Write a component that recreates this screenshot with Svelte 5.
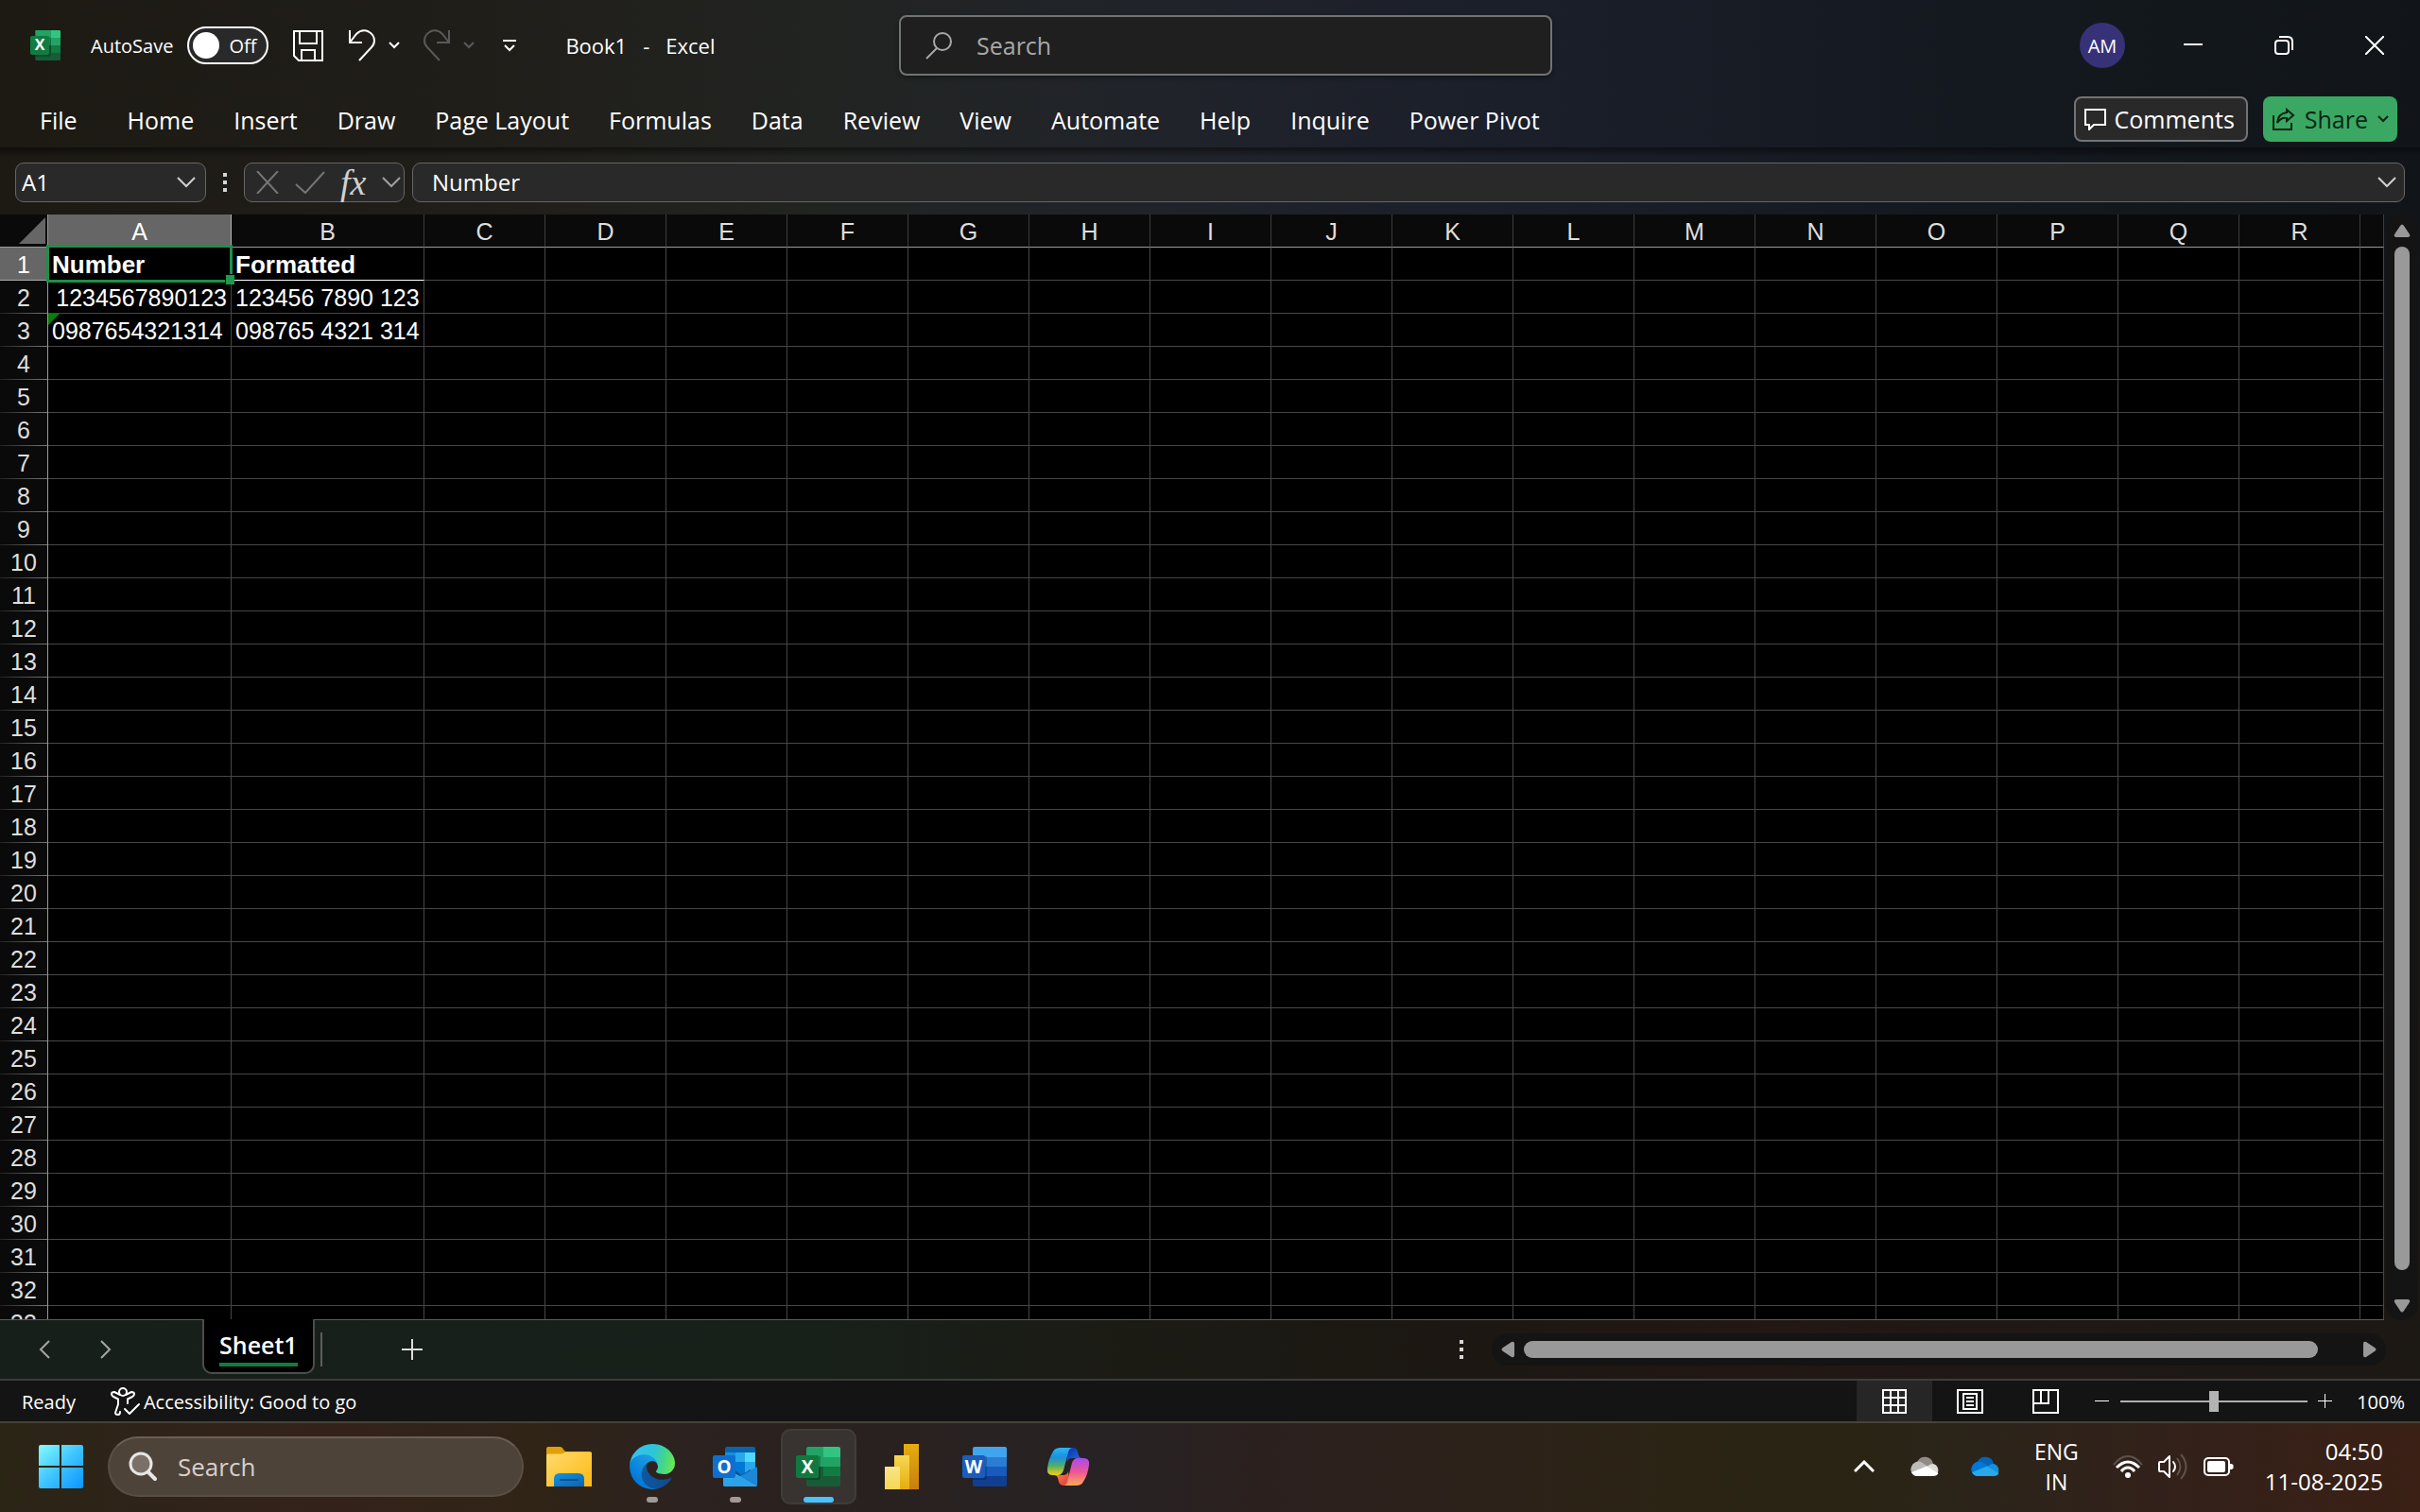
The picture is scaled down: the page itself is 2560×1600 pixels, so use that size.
<script>
  const menus = ['File', 'Home', 'Insert', 'Draw', 'Page Layout', 'Formulas', 'Data', 'Review', 'View', 'Automate', 'Help', 'Inquire', 'Power Pivot'];
  const columns = 'ABCDEFGHIJKLMNOPQR'.split('');
  const rows = Array.from({ length: 33 }, (_, i) => i + 1);
  const cells = {
    A1: { text: 'Number', kind: 'bold' },
    B1: { text: 'Formatted', kind: 'bold under' },
    A2: { text: '1234567890123', kind: 'num' },
    B2: { text: '123456 7890 123', kind: '' },
    A3: { text: '0987654321314', kind: 'flag' },
    B3: { text: '098765 4321 314', kind: '' }
  };
  let autosave = $state(false);
  let cellName = $state('A1');
  let formula = $state('Number');
  let query = $state('');
  let taskQuery = $state('');
  let zoom = $state(100);
</script>

{#snippet chevron(w, h, sw)}
  <svg width={w} height={h} viewBox="0 0 {w} {h}" fill="none" stroke="currentColor" stroke-width={sw}>
    <path d="M1 1L{w / 2} {h - 2}L{w - 1} 1" />
  </svg>
{/snippet}

{#snippet cloud(top, left, right, front)}
  <svg width="32" height="22" viewBox="0 0 32 22">
    <path d="M8 6A9 9 0 0 1 25 8L17 13z" fill={top} />
    <path d="M8 21A7 7 0 0 1 2 11 8 8 0 0 1 12 6L20 11 8 21z" fill={left} />
    <path d="M18 11.500Q21 8 25 8A7 7 0 0 1 28 20L18 14z" fill={right} />
    <path d="M2 17L18 10.500 30.500 18Q29 21 25 21H8Q4 21 2 17z" fill={front} />
  </svg>
{/snippet}

{#snippet excelIcon(size)}
  <svg width={size} height={size} viewBox="0 0 48 48">
    <path d="M18 0H32V16H16V2Q16 0 18 0z" fill="#21a366" />
    <path d="M32 0H46Q48 0 48 2V12H32z" fill="#33c481" />
    <path d="M8 12H32V24H8z" fill="#21a366" />
    <path d="M32 12H48V24H32z" fill="#21a366" />
    <path d="M8 24H32V36H8z" fill="#185c37" />
    <path d="M32 24H48V36H32z" fill="#107c41" />
    <path d="M8 36H48V46Q48 48 46 48H10Q8 48 8 46z" fill="#185c37" />
    <path d="M8 0H32V12H8z" fill="#21a366" />
    <path d="M8 11H30Q33 11 33 14V38Q33 42 29 42H8z" fill="#000" opacity=".2" />
    <rect y="9" width="30" height="30" rx="3" fill="#107c41" />
    <text x="15" y="32" class="glyph">X</text>
  </svg>
{/snippet}

<div class="desktop">
  <header class="chrome">
    <div class="titlebar">
      <div class="quick">
        {@render excelIcon(32)}
        <label class="autosave">
          <span>AutoSave</span>
          <input type="checkbox" role="switch" bind:checked={autosave} />
          <span class="switch"><i></i>Off</span>
        </label>
        <button class="save" aria-label="Save">
          <svg width="32" height="33" viewBox="0 0 32 33" fill="none" stroke="#fff" stroke-width="2">
            <path d="M1 1H31V32H6L1 27zM7 1V14H25V1M9 32V21H23V32" />
          </svg>
        </button>
        <button class="undo" aria-label="Undo">
          <svg width="30" height="34" viewBox="0 0 30 34" fill="none" stroke="#fff" stroke-width="2">
            <path d="M2 1V14H15M2 14L9 5Q15-1 22 2.500 28 6 28 12 28 16 25 19L12 33" />
          </svg>
          {@render chevron(12, 8, 2)}
        </button>
        <button class="redo" aria-label="Redo">
          <svg width="30" height="34" viewBox="0 0 30 34" fill="none" stroke="currentColor" stroke-width="2">
            <path d="M28 1V14H15M28 14L21 5Q15-1 8 2.500 2 6 2 12 2 16 5 19L18 33" />
          </svg>
          {@render chevron(12, 8, 2)}
        </button>
        <button class="custom" aria-label="Customize Quick Access Toolbar">
          <svg width="14" height="13" viewBox="0 0 14 13" fill="none" stroke="#fff" stroke-width="2">
            <path d="M0 1H14M2 6L7 11 12 6" />
          </svg>
        </button>
        <h1><span>Book1</span><span>-</span><span>Excel</span></h1>
      </div>
      <label class="search">
        <svg width="30" height="30" viewBox="0 0 30 30" fill="none" stroke="#a8a8a8" stroke-width="2">
          <circle cx="18" cy="11" r="9" /><path d="M12 18L1 29" />
        </svg>
        <input type="text" placeholder="Search" aria-label="Search commands" bind:value={query} />
      </label>
      <div class="window">
        <button class="avatar">AM</button>
        <button aria-label="Minimize"><svg width="20" height="20" viewBox="0 0 20 20"><path d="M0 9H20" stroke="#fff" stroke-width="2" /></svg></button>
        <button aria-label="Restore">
          <svg width="20" height="20" viewBox="0 0 20 20" fill="none" stroke="#fff" stroke-width="2">
            <rect x="1" y="5" width="14" height="14" rx="3" /><path d="M5 1H14Q19 1 19 6V15" />
          </svg>
        </button>
        <button aria-label="Close"><svg width="20" height="20" viewBox="0 0 20 20"><path d="M0 0L20 20M20 0L0 20" stroke="#fff" stroke-width="2" /></svg></button>
      </div>
    </div>

    <div class="ribbon">
      <nav>
        {#each menus as m}
          <button class:file={m === 'File'}>{m}</button>
        {/each}
      </nav>
      <button class="comments">
        <svg width="23" height="23" viewBox="0 0 23 23" fill="none" stroke="#fff" stroke-width="2"><path d="M1 1H22V17H10L5 22V17H1z" /></svg>
        Comments
      </button>
      <button class="share">
        <svg width="24" height="24" viewBox="0 0 24 24" fill="none" stroke="#0b2415" stroke-width="2">
          <path d="M1 8V23H20V16" /><path d="M15 2L22 8 15 14V11Q9 10 5 16 6 6 15 5z" />
        </svg>
        Share
        {@render chevron(12, 8, 2)}
      </button>
    </div>

    <div class="formulabar">
      <div class="field namebox">
        <input type="text" aria-label="Name box" bind:value={cellName} />
        <button aria-label="Open name list">{@render chevron(20, 12, 2)}</button>
      </div>
      <span class="dots"><i></i><i></i><i></i></span>
      <div class="field fx">
        <button class="dim" aria-label="Cancel"><svg width="24" height="24" viewBox="0 0 24 24"><path d="M1 0L23 24M23 0L1 24" stroke="currentColor" stroke-width="2" /></svg></button>
        <button class="dim" aria-label="Enter"><svg width="32" height="24" viewBox="0 0 32 24" fill="none"><path d="M1 14L11 23 31 1" stroke="currentColor" stroke-width="2" /></svg></button>
        <button class="fn">fx</button>
        <button class="mid" aria-label="Function list">{@render chevron(20, 12, 2)}</button>
      </div>
      <div class="field formula">
        <input type="text" aria-label="Formula" bind:value={formula} />
        <button aria-label="Expand formula bar">{@render chevron(20, 12, 2)}</button>
      </div>
    </div>
  </header>

  <main class="work">
    <div class="sheet">
      <table>
        <colgroup>
          <col class="cnum" /><col class="ca" /><col class="cb" />
          {#each columns.slice(2) as c}<col class="cx" />{/each}
          <col />
        </colgroup>
        <thead>
          <tr>
            <th class="corner" aria-label="Select all"><svg width="28" height="28" viewBox="0 0 28 28"><path d="M28 0V28H0z" fill="#666" /></svg></th>
            {#each columns as c}<th class:on={c === 'A'}>{c}</th>{/each}
            <th aria-label="Next column"></th>
          </tr>
        </thead>
        <tbody>
          {#each rows as r}
            <tr>
              <th class:on={r === 1}>{r}</th>
              {#each columns as c}
                {@const cell = cells[c + r]}
                <td class={cell?.kind} class:sel={c + r === 'A1'}>{cell?.text ?? ''}</td>
              {/each}
              <td></td>
            </tr>
          {/each}
        </tbody>
      </table>
    </div>
    <div class="vscroll">
      <div class="vtrack">
        <button aria-label="Scroll up"><svg width="18" height="14" viewBox="0 0 18 14"><path d="M7 2Q9-1 11 2L17 11Q18 14 15 14H3Q0 14 1 11z" fill="#999" /></svg></button>
        <div class="vthumb"></div>
        <button aria-label="Scroll down"><svg width="18" height="14" viewBox="0 0 18 14"><path d="M7 12Q9 15 11 12L17 3Q18 0 15 0H3Q0 0 1 3z" fill="#999" /></svg></button>
      </div>
    </div>
  </main>

  <div class="sheetbar">
    <div class="arrows">
      <button aria-label="Previous sheet"><svg width="12" height="20" viewBox="0 0 12 20" fill="none" stroke="#a5a5a5" stroke-width="2"><path d="M11 1L2 10 11 19" /></svg></button>
      <button aria-label="Next sheet"><svg width="12" height="20" viewBox="0 0 12 20" fill="none" stroke="#a5a5a5" stroke-width="2"><path d="M1 1L10 10 1 19" /></svg></button>
    </div>
    <button class="tab"><span>Sheet1</span></button>
    <span class="divider"></span>
    <button class="add" aria-label="New sheet"><svg width="22" height="22" viewBox="0 0 22 22"><path d="M0 11H22M11 0V22" stroke="#ddd" stroke-width="2" /></svg></button>
    <span class="dots"><i></i><i></i><i></i></span>
    <div class="htrack">
      <button aria-label="Scroll left"><svg width="14" height="18" viewBox="0 0 14 18"><path d="M2 7Q-1 9 2 11L11 17Q14 18 14 15V3Q14 0 11 1z" fill="#999" /></svg></button>
      <div class="hthumb"></div>
      <button aria-label="Scroll right"><svg width="14" height="18" viewBox="0 0 14 18"><path d="M12 7Q15 9 12 11L3 17Q0 18 0 15V3Q0 0 3 1z" fill="#999" /></svg></button>
    </div>
  </div>

  <div class="status">
    <span class="ready">Ready</span>
    <button class="access">
      <svg width="32" height="30" viewBox="0 0 32 30" fill="none" stroke="#fff" stroke-width="2" stroke-linecap="round" stroke-linejoin="round">
        <circle cx="13" cy="5" r="4" />
        <path d="M10 8L4 5Q1 5 1 7 1 9 3 10L8 12.500V18L5 27Q5 29 8 29 10 29 10 26M16 8L22 5Q25 5 25 7 25 9 23 10L18 12.500V17" />
        <path d="M15 23L20 28 30 18" />
      </svg>
      <span>Accessibility: Good to go</span>
    </button>
    <span class="fill"></span>
    <button class="view active" aria-label="Normal view"><svg width="26" height="26" viewBox="0 0 26 26" fill="none" stroke="#fff" stroke-width="2"><path d="M1 1H25V25H1zM1 9H25M1 17H25M9 1V25M17 1V25" /></svg></button>
    <button class="view" aria-label="Page layout view"><svg width="28" height="26" viewBox="0 0 28 26" fill="none" stroke="#fff" stroke-width="2"><path d="M1 1H27V25H1zM7 5H21V21H7zM10 9H18M10 13H18M10 17H18" /></svg></button>
    <button class="view" aria-label="Page break view"><svg width="28" height="26" viewBox="0 0 28 26" fill="none" stroke="#fff" stroke-width="2"><path d="M1 1H27V25H1zM1 15H17V1M9 1V15" /></svg></button>
    <button class="minus" aria-label="Zoom out"><svg width="15" height="15" viewBox="0 0 15 15"><path d="M0 7.500H15" stroke="#fff" /></svg></button>
    <input type="range" min="10" max="190" aria-label="Zoom" bind:value={zoom} />
    <button class="plus" aria-label="Zoom in"><svg width="15" height="15" viewBox="0 0 15 15"><path d="M0 7.500H15M7.500 0V15" stroke="#fff" /></svg></button>
    <span class="percent">{zoom}%</span>
  </div>

  <footer class="taskbar">
    <button class="start" aria-label="Start">
      <svg width="47" height="46" viewBox="0 0 47 46">
        <defs><linearGradient id="win" x1="0" y1="0" x2="1" y2="1"><stop offset="0" stop-color="#84fbff" /><stop offset=".5" stop-color="#40c4ff" /><stop offset="1" stop-color="#0a94ff" /></linearGradient></defs>
        <path d="M2 0H22V22H0V2Q0 0 2 0zM24 0H45Q47 0 47 2V22H24zM0 24H22V46H2Q0 46 0 44zM24 24H47V44Q47 46 45 46H24z" fill="url(#win)" />
      </svg>
    </button>
    <label class="tasksearch">
      <svg width="30" height="32" viewBox="0 0 30 32" fill="none" stroke="#e6e6e6" stroke-width="3" stroke-linecap="round">
        <circle cx="13" cy="13" r="11" fill="#7b7067" /><path d="M21 22L28 29" stroke-width="4" />
      </svg>
      <input type="text" placeholder="Search" aria-label="Search the computer" bind:value={taskQuery} />
    </label>
    <div class="apps">
      <button class="app" aria-label="File Explorer">
        <svg width="48" height="42" viewBox="0 0 48 42">
          <defs>
            <linearGradient id="fold" x1="0" y1="0" x2="1" y2="1"><stop offset="0" stop-color="#ffdb6e" /><stop offset="1" stop-color="#fdb813" /></linearGradient>
            <linearGradient id="foldb" x1="0" y1="0" x2="1" y2="1"><stop offset="0" stop-color="#1593dd" /><stop offset="1" stop-color="#0963b4" /></linearGradient>
          </defs>
          <path d="M0 2Q0 0 2 0H14Q17 0 18 3L20 5H46Q48 5 48 7V14H0z" fill="#e0a006" />
          <path d="M0 9Q0 8 2 7.500H16Q18 7.500 20 5.500H46Q48 5.500 48 7.500V42H0z" fill="url(#fold)" />
          <path d="M8 42V34Q8 28 14 28H34Q40 28 40 34V42z" fill="url(#foldb)" />
          <path d="M15 35H33" stroke="#0b4f92" stroke-width="2" stroke-linecap="round" />
        </svg>
      </button>
      <button class="app open" aria-label="Edge">
        <svg width="48" height="48" viewBox="0 0 256 256">
          <defs>
            <linearGradient id="e1" x1="63" y1="180" x2="241" y2="180" gradientUnits="userSpaceOnUse"><stop offset="0" stop-color="#0c59a4" /><stop offset="1" stop-color="#114a8b" /></linearGradient>
            <linearGradient id="e2" x1="157" y1="100" x2="46" y2="220" gradientUnits="userSpaceOnUse"><stop offset="0" stop-color="#1b9de2" /><stop offset=".3" stop-color="#1595df" /><stop offset="1" stop-color="#0078d7" /></linearGradient>
            <linearGradient id="e3" x1="10" y1="70" x2="255" y2="130" gradientUnits="userSpaceOnUse"><stop offset="0" stop-color="#35c1f1" /><stop offset=".5" stop-color="#2fc4d8" /><stop offset=".75" stop-color="#44d68a" /><stop offset="1" stop-color="#66eb4c" /></linearGradient>
          </defs>
          <g transform="translate(-4.630 -4.920)">
            <path fill="url(#e1)" d="M235.680 195.460a93.730 93.730 0 0 1-10.540 4.710 101.870 101.870 0 0 1-35.900 6.460c-47.320 0-88.540-32.550-88.540-74.320A31.480 31.480 0 0 1 117.130 105c-42.800 1.800-53.800 46.400-53.800 72.530 0 73.880 68.090 81.370 82.760 81.370 7.910 0 19.840-2.300 27-4.560l1.310-.44a128.340 128.340 0 0 0 66.600-52.800 4 4 0 0 0-5.320-5.640z" />
            <path fill="url(#e2)" d="M110.340 246.340A79.200 79.200 0 0 1 87.600 225a80.720 80.720 0 0 1 29.530-120c3.120-1.470 8.450-4.130 15.540-4a32.350 32.350 0 0 1 25.690 13 31.880 31.880 0 0 1 6.360 18.660c0-.21 24.460-79.600-80-79.600-43.900 0-80 41.660-80 78.210a130.150 130.150 0 0 0 12.110 56 128 128 0 0 0 156.380 67.110 75.550 75.550 0 0 1-62.780-8z" />
            <path fill="url(#e3)" d="M156.940 153.780c-.81 1.050-3.300 2.500-3.300 5.660 0 2.610 1.700 5.120 4.720 7.230 14.380 10 41.490 8.680 41.560 8.680a59.560 59.560 0 0 0 30.270-8.350 61.380 61.380 0 0 0 30.430-52.880c.26-22.410-8-37.310-11.340-43.910C228.090 28.760 182.350 4.920 132.610 4.920a128 128 0 0 0-128 126.200c.48-36.540 36.800-66.050 80-66.050 3.500 0 23.460.34 42 10.070 16.340 8.580 24.900 18.940 30.850 29.210 6.180 10.670 7.280 24.150 7.280 29.520s-2.740 13.330-7.800 19.910z" />
          </g>
        </svg>
      </button>
      <button class="app open" aria-label="Outlook">
        <svg width="48" height="42" viewBox="0 0 48 42">
          <path d="M15 0H43Q45 0 45 2V6H13V2Q13 0 15 0z" fill="#0864b1" />
          <path d="M13 6H24V16H13z" fill="#1490df" /><path d="M24 6H34V16H24z" fill="#28a8ea" /><path d="M34 6H45V16H34z" fill="#50d9ff" />
          <path d="M13 16H24V30H13z" fill="#0364b8" /><path d="M24 16H34V30H24z" fill="#0078d4" /><path d="M34 16H45V26L34 32z" fill="#28a8ea" />
          <path d="M20 22L30 30 40 24V34H20z" fill="#0a4a87" />
          <path d="M11 22L29 31 47 42H13Q11 42 11 40z" fill="#28a8ea" />
          <path d="M47 21V41L29 31z" fill="#1b87d6" />
          <path d="M11 41L29 31 47 41Q46 42 45 42H13z" fill="#2ba3ea" />
          <rect y="9" width="24" height="24" rx="2" fill="#0f6fd0" />
          <text x="12" y="28" class="glyph small">O</text>
        </svg>
      </button>
      <button class="app current" aria-label="Excel">
        <svg width="48" height="42" viewBox="0 0 48 42">
          <path d="M13 0H29V21H11V2Q11 0 13 0z" fill="#21a366" /><path d="M29 0H45Q47 0 47 2V11H29z" fill="#33c481" />
          <path d="M29 11H47V21H29z" fill="#21a366" /><path d="M11 21H29V32H11z" fill="#185c37" /><path d="M29 21H47V32H29z" fill="#107c41" />
          <path d="M11 31H47V40Q47 42 45 42H13Q11 42 11 40z" fill="#185c37" />
          <path d="M11 10H26V34Q26 35 24 35H11z" fill="#000" opacity=".2" />
          <rect y="9" width="24" height="24" rx="2" fill="#10793f" />
          <text x="12" y="28" class="glyph small">X</text>
        </svg>
      </button>
      <button class="app" aria-label="Power BI">
        <svg width="36" height="48" viewBox="0 0 36 48">
          <defs><linearGradient id="p1" x1="0" y1="0" x2="0" y2="1"><stop offset="0" stop-color="#e6ad10" /><stop offset="1" stop-color="#c87e0e" /></linearGradient>
          <linearGradient id="p2" x1="0" y1="0" x2="0" y2="1"><stop offset="0" stop-color="#f6d751" /><stop offset="1" stop-color="#e6ad10" /></linearGradient>
          <linearGradient id="p3" x1="0" y1="0" x2="0" y2="1"><stop offset="0" stop-color="#f9e589" /><stop offset="1" stop-color="#f6d751" /></linearGradient></defs>
          <path d="M20 0H36V48H20z" fill="url(#p1)" /><path d="M10 12H25Q26 12 26 13V48H10z" fill="url(#p2)" /><path d="M0 24H15Q16 24 16 25V48H0z" fill="url(#p3)" />
        </svg>
      </button>
      <button class="app" aria-label="Word">
        <svg width="48" height="42" viewBox="0 0 48 42">
          <path d="M13 0H45Q47 0 47 2V11H11V2Q11 0 13 0z" fill="#41a5ee" /><path d="M11 11H47V21H11z" fill="#2b7cd3" />
          <path d="M11 21H47V32H11z" fill="#185abd" /><path d="M11 31H47V40Q47 42 45 42H13Q11 42 11 40z" fill="#103f91" />
          <path d="M11 10H26V34Q26 35 24 35H11z" fill="#000" opacity=".2" />
          <rect y="9" width="24" height="24" rx="2" fill="#1b5cbe" />
          <text x="12" y="28" class="glyph small">W</text>
        </svg>
      </button>
      <button class="app" aria-label="Copilot">
        <svg width="44" height="40" viewBox="0 0 44 40">
          <defs>
            <linearGradient id="c1" x1="0" y1="0" x2="0" y2="1"><stop offset="0" stop-color="#2cb5f5" /><stop offset=".35" stop-color="#1a8fe0" /><stop offset=".65" stop-color="#4fae6a" /><stop offset="1" stop-color="#f5cf10" /></linearGradient>
            <linearGradient id="c2" x1="0" y1="0" x2="0" y2="1"><stop offset="0" stop-color="#a44cf0" /><stop offset=".5" stop-color="#ee5597" /><stop offset="1" stop-color="#ffab55" /></linearGradient>
            <linearGradient id="c3" x1="0" y1="0" x2="1" y2="1"><stop offset="0" stop-color="#0a2fa8" /><stop offset="1" stop-color="#1f74e6" /></linearGradient>
            <linearGradient id="c4" x1="0" y1="0" x2="1" y2="1"><stop offset="0" stop-color="#ff8a3c" /><stop offset="1" stop-color="#e0334a" /></linearGradient>
          </defs>
          <path d="M20 0H27Q31 0 32 4L33 8Q34 11 37 11H26Q22 11 21 15z" fill="url(#c3)" />
          <path d="M24 40H18Q13 40 12 36L11 32Q10 29 7 29H17Q21 29 22 25z" fill="url(#c4)" />
          <path d="M14 0H27Q23 0 22 5L17 24Q15 29 11 29H6Q-1 29 0 22 1 12 6 4 8 0 14 0z" fill="url(#c1)" />
          <path d="M30 40H17Q20 40 21 36L26 16Q28 11 32 11H38Q45 11 44 18 43 28 38 36 36 40 30 40z" fill="url(#c2)" />
        </svg>
      </button>
    </div>
    <span class="fill"></span>
    <div class="tray">
      <button aria-label="Show hidden icons"><svg width="22" height="14" viewBox="0 0 22 14" fill="none" stroke="#fff" stroke-width="3"><path d="M1 12L11 2 21 12" /></svg></button>
      <button class="c1" aria-label="OneDrive personal">{@render cloud('#8f8c88', '#bdbbb8', '#dddcda', '#ffffff')}</button>
      <button class="c2" aria-label="OneDrive work">{@render cloud('#0364b8', '#0078d4', '#1490df', '#28a8ea')}</button>
      <button class="lang"><span>ENG</span><span>IN</span></button>
      <button class="system" aria-label="Network, sound and battery">
        <svg width="32" height="26" viewBox="0 0 32 26" fill="none" stroke="#fff" stroke-width="2">
          <path d="M1 11Q8 2 16 2T31 11" stroke="#5e524b" /><path d="M4 14Q10 8 16 8T28 14M9 18Q12 14 16 14T23 18" stroke-width="3" /><circle cx="16" cy="22" r="3" fill="#fff" stroke="none" />
        </svg>
        <svg width="32" height="28" viewBox="0 0 32 28" fill="none" stroke="#fff" stroke-width="2" stroke-linejoin="round">
          <path d="M1 10Q1 9 2 9H6L12 3V25L6 19H2Q1 19 1 18z" /><path d="M16 9Q20 14 16 19" stroke-linecap="round" />
          <path d="M20 5Q27 14 20 23M24 1Q35 14 24 27" stroke="#5e524b" />
        </svg>
        <svg width="32" height="20" viewBox="0 0 32 20" fill="none" stroke="#fff" stroke-width="2">
          <rect x="1" y="1" width="26" height="18" rx="4" /><rect x="5" y="5" width="17" height="10" rx="1" fill="#fff" /><path d="M29 7V13M30 8V12" stroke-width="3" />
        </svg>
      </button>
      <button class="clock"><span>04:50</span><span>11-08-2025</span></button>
    </div>
  </footer>
</div>

<style>
  :global(body) { background: #000; overflow: hidden; }
  * { box-sizing: border-box; }
  svg { display: block; flex: none; }
  button, input { font: inherit; color: inherit; background: none; border: 0; padding: 0; margin: 0; outline: none; }
  button { display: flex; align-items: center; }
  .glyph { font: bold 24px 'Open Sans', sans-serif; fill: #fff; text-anchor: middle; }
  .glyph.small { font-size: 19px; }
  .fill { flex: 1; }

  .desktop { height: 100vh; display: flex; flex-direction: column; overflow: hidden; font-family: 'Open Sans', 'Segoe UI', sans-serif; color: #fff; white-space: nowrap; }
  .chrome { flex: none; background: linear-gradient(90deg, #1d1a14 0%, #201e19 20%, #222422 34%, #20232a 48%, #1b1f2a 62%, #151a22 78%, #12171b 92%, #11151a 100%); }

  .titlebar { height: 96px; display: grid; grid-template-columns: 951fr 691fr 918fr; align-items: center; }
  .quick { display: flex; align-items: center; padding-left: 32px; }
  .autosave { position: relative; display: flex; align-items: center; gap: 15px; margin-left: 32px; font-size: 20px; }
  .autosave input { position: absolute; opacity: 0; }
  .switch { width: 86px; height: 40px; border: 2px solid #fff; border-radius: 20px; background: #292929; display: flex; align-items: center; gap: 10px; padding-left: 4px; }
  .switch i { width: 28px; height: 28px; border-radius: 50%; background: #fff; }
  .save { margin-left: 26px; }
  .undo, .redo { gap: 13px; }
  .undo { margin-left: 26px; }
  .redo { margin-left: 24px; color: #595959; }
  .custom { margin-left: 30px; }
  h1 { margin: 0 0 0 52px; font-size: 22px; font-weight: 400; display: flex; gap: 17px; }
  .search { height: 64px; border: 2px solid #737373; border-radius: 8px; background: #1f1f1f; display: flex; align-items: center; gap: 24px; padding: 0 26px; box-shadow: 0 2px 4px rgba(0, 0, 0, .4); }
  .search input { flex: 1; min-width: 0; font-size: 25px; }
  input::placeholder { color: #a8a8a8; opacity: 1; }
  .window { display: flex; justify-content: flex-end; align-items: center; gap: 76px; padding-right: 38px; }
  .avatar { width: 48px; height: 48px; border-radius: 50%; background: #373277; justify-content: center; font-size: 20px; margin-right: -14px; }

  .ribbon { height: 60px; display: flex; align-items: center; padding-right: 24px; font-size: 25px; }
  nav { flex: 1; display: flex; padding-left: 21px; }
  nav button { padding: 2px 21px 0; line-height: 40px; }
  nav .file { margin-right: 11px; }
  .comments, .share { height: 48px; border-radius: 8px; }
  .comments { border: 2px solid #737373; background: #292929; padding: 0 12px 0 9px; gap: 9px; }
  .share { margin-left: 16px; background: #3aa862; color: #0b2415; padding: 0 9px 0 10px; gap: 10px; }

  .formulabar { height: 71px; display: flex; align-items: center; padding: 2px 16px 0; background: linear-gradient(180deg, rgba(0, 0, 0, .45), transparent 10px); font-size: 24px; }
  .field { height: 42px; display: flex; align-items: center; border: 1px solid #666; border-radius: 9px; background: #292929; }
  .field input { flex: 1; min-width: 0; }
  .field button { color: #d0d0d0; }
  .namebox { width: 202px; padding: 0 10px 0 6px; }
  .dots { display: flex; flex-direction: column; gap: 4px; margin: 0 18px; }
  .dots i { width: 4px; height: 4px; background: #d6d6d6; }
  .fx { width: 170px; padding: 0 3px 0 12px; justify-content: space-between; }
  .field .dim { color: #757575; }
  .field .mid { color: #a0a0a0; }
  .fn { font: italic 38px/38px 'Liberation Serif', serif; }
  .formula { flex: 1; margin-left: 8px; padding: 0 8px 0 20px; }

  .work { flex: 1; min-height: 0; display: flex; background: linear-gradient(180deg, #11151a, #1c1713); }
  .sheet { flex: 1; min-width: 0; overflow: hidden; background: #000; border-bottom: 1px solid #5c5c5c; font-family: 'Liberation Sans', Arial, sans-serif; font-size: 25px; line-height: 30px; }
  table { width: 100%; table-layout: fixed; border-collapse: separate; border-spacing: 0; }
  .cnum { width: 51px; }
  .ca { width: 194px; }
  .cb { width: 204px; }
  .cx { width: 128px; }
  tr { height: 35px; }
  th, td { height: 35px; padding: 2px 4px 0 4px; border-right: 1px solid #474747; border-bottom: 1px solid #474747; }
  th { font-weight: 400; color: #dedede; text-align: center; padding: 2px 0 0; background: #0a0a0a; }
  thead th { border-right-color: #3c3c3c; border-bottom-color: #9a9a9a; }
  tbody th { padding-top: 0; border-right-color: #9a9a9a; border-bottom: 0; background: linear-gradient(90deg, #222, #777) left bottom / 100% 1px no-repeat #0a0a0a; }
  th.on { background: #666; color: #fff; border-color: #b5b5b5; }
  tbody th.on { background: linear-gradient(#aaa, #aaa) left bottom / 100% 1px no-repeat #666; }
  .corner { border-right-color: #9a9a9a; padding: 0 0 0 20px; }
  td { text-align: left; color: #fff; }
  .bold { font-weight: 700; font-size: 26px; }
  .under { border-bottom-color: #fff; }
  .num { text-align: right; }
  .flag { background: linear-gradient(135deg, #0a7d0a 8px, transparent 9px); }
  .sel { position: relative; }
  .sel::before { content: ''; position: absolute; inset: -3px -2px -3px -2px; border: 3px solid #1f8f49; }
  .sel::after { content: ''; position: absolute; right: -4px; bottom: -5px; width: 9px; height: 10px; background: #1f9a4c; border: solid #000; border-width: 1px 0 0 1px; }
  .vscroll { width: 38px; padding: 0 2px; }
  .vtrack { height: 100%; border-radius: 17px; background: #141414; display: flex; flex-direction: column; align-items: center; padding: 10px 0 8px; }
  .vthumb { flex: 1; width: 16px; border-radius: 8px; background: #999; margin: 10px 0 31px; }

  .sheetbar { height: 64px; flex: none; display: flex; align-items: center; background: linear-gradient(90deg, #171f1b 0%, #18201a 34%, #1b1c15 44%, #1c1712 60%, #221713 72%, #201815 82%, #1c1813 100%); border-bottom: 2px solid #3d3d3d; padding-right: 36px; }
  .arrows { display: flex; gap: 53px; padding-left: 41px; width: 214px; }
  .tab { position: relative; align-self: flex-start; height: 58px; margin-top: -1px; padding: 8px 16px 0; background: #000; border: 2px solid #4d4d4d; border-top: 0; border-radius: 0 0 10px 10px; align-items: flex-start; font-size: 25px; font-weight: 600; }
  .tab span { line-height: 38px; border-bottom: 4px solid #107c41; }
  .divider { width: 2px; height: 36px; background: #5e5e5e; margin-left: 6px; }
  .add { margin-left: 84px; }
  .sheetbar .dots { margin: 0 30px 0 auto; }
  .htrack { width: 946px; height: 34px; border-radius: 17px; background: #141414; display: flex; align-items: center; padding: 0 10px; }
  .hthumb { flex: 1; height: 18px; border-radius: 9px; background: #999; margin: 0 48px 0 10px; }

  .status { height: 45px; flex: none; display: flex; align-items: center; background: #141414; border-bottom: 2px solid #474239; font-size: 20px; padding: 0 16px 0 23px; }
  .ready, .access span, .percent { padding-top: 2px; }
  .access { margin-left: 37px; gap: 3px; }
  .view { width: 80px; align-self: stretch; justify-content: center; }
  .view.active { background: #262626; }
  .minus { margin-left: 12px; }
  .status input { appearance: none; width: 198px; height: 24px; margin: 0 11px 0 12px; background: linear-gradient(#b0b0b0, #b0b0b0) center / 100% 2px no-repeat; }
  .status input::-webkit-slider-thumb { appearance: none; width: 10px; height: 22px; background: #b3b3b3; }
  .percent { margin-left: 26px; }

  .taskbar { height: 94px; flex: none; display: flex; align-items: center; padding: 0 39px 2px 0; background: linear-gradient(90deg, #2b2516 0%, #30231a 8%, #34221a 14%, #302417 22%, #2c221f 28%, #29211f 36%, #272224 46%, #2b201e 52%, #2d2219 62%, #2b2414 70%, #292414 76%, #2c241a 82%, #33211a 90%, #3a2015 100%); }
  .start { margin-left: 41px; }
  .tasksearch { width: 440px; height: 64px; margin-left: 26px; border-radius: 32px; background: #4e4338; border: 2px solid #5a4f45; border-top-color: #6a5f56; display: flex; align-items: center; gap: 22px; padding: 0 20px; }
  .tasksearch input { flex: 1; min-width: 0; font-size: 26px; }
  .tasksearch input::placeholder { color: #d6d0cb; }
  .apps { display: flex; gap: 8px; margin-left: 8px; }
  .app { position: relative; width: 80px; height: 80px; justify-content: center; border: 2px solid transparent; border-radius: 10px; }
  .current { background: #383330; border-color: #403c39; }
  .open::after, .current::after { content: ''; position: absolute; bottom: 0; left: 50%; width: 12px; height: 6px; margin-left: -6px; border-radius: 3px; background: #9f9a97; }
  .current::after { width: 32px; margin-left: -16px; background: #4cc2ff; }
  .tray { display: flex; align-items: center; font-size: 23px; line-height: 32px; }
  .c1 { margin-left: 37px; }
  .c2 { margin-left: 32px; }
  .lang { flex-direction: column; margin-left: 36px; }
  .system { gap: 16px; margin-left: 36px; }
  .clock { flex-direction: column; align-items: flex-end; margin-left: 33px; font-size: 24px; }
</style>
